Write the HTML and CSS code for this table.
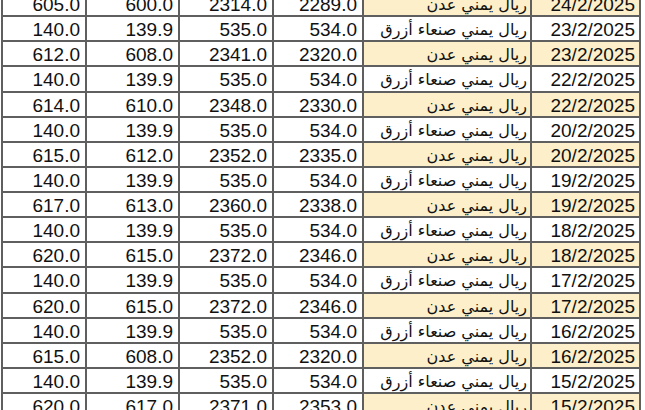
FILE: index.html
```html
<!DOCTYPE html>
<html lang="ar">
<head>
<meta charset="utf-8">
<link rel="stylesheet" href="styles.css">
</head>
<body>
<table class="sheet">
  <colgroup><col class="w1"><col class="w2"><col class="w3"><col class="w4"><col class="w5"><col class="w6"></colgroup>
  <tr><td>605.0</td><td>600.0</td><td>2314.0</td><td>2289.0</td><td class="t y">ريال يمني عدن</td><td class="d y">24/2/2025</td></tr>
  <tr><td>140.0</td><td>139.9</td><td>535.0</td><td>534.0</td><td class="t">ريال يمني صنعاء أزرق</td><td class="d">23/2/2025</td></tr>
  <tr><td>612.0</td><td>608.0</td><td>2341.0</td><td>2320.0</td><td class="t y">ريال يمني عدن</td><td class="d y">23/2/2025</td></tr>
  <tr><td>140.0</td><td>139.9</td><td>535.0</td><td>534.0</td><td class="t">ريال يمني صنعاء أزرق</td><td class="d">22/2/2025</td></tr>
  <tr><td>614.0</td><td>610.0</td><td>2348.0</td><td>2330.0</td><td class="t y">ريال يمني عدن</td><td class="d y">22/2/2025</td></tr>
  <tr><td>140.0</td><td>139.9</td><td>535.0</td><td>534.0</td><td class="t">ريال يمني صنعاء أزرق</td><td class="d">20/2/2025</td></tr>
  <tr><td>615.0</td><td>612.0</td><td>2352.0</td><td>2335.0</td><td class="t y">ريال يمني عدن</td><td class="d y">20/2/2025</td></tr>
  <tr><td>140.0</td><td>139.9</td><td>535.0</td><td>534.0</td><td class="t">ريال يمني صنعاء أزرق</td><td class="d">19/2/2025</td></tr>
  <tr><td>617.0</td><td>613.0</td><td>2360.0</td><td>2338.0</td><td class="t y">ريال يمني عدن</td><td class="d y">19/2/2025</td></tr>
  <tr><td>140.0</td><td>139.9</td><td>535.0</td><td>534.0</td><td class="t">ريال يمني صنعاء أزرق</td><td class="d">18/2/2025</td></tr>
  <tr><td>620.0</td><td>615.0</td><td>2372.0</td><td>2346.0</td><td class="t y">ريال يمني عدن</td><td class="d y">18/2/2025</td></tr>
  <tr><td>140.0</td><td>139.9</td><td>535.0</td><td>534.0</td><td class="t">ريال يمني صنعاء أزرق</td><td class="d">17/2/2025</td></tr>
  <tr><td>620.0</td><td>615.0</td><td>2372.0</td><td>2346.0</td><td class="t y">ريال يمني عدن</td><td class="d y">17/2/2025</td></tr>
  <tr><td>140.0</td><td>139.9</td><td>535.0</td><td>534.0</td><td class="t">ريال يمني صنعاء أزرق</td><td class="d">16/2/2025</td></tr>
  <tr><td>615.0</td><td>608.0</td><td>2352.0</td><td>2320.0</td><td class="t y">ريال يمني عدن</td><td class="d y">16/2/2025</td></tr>
  <tr><td>140.0</td><td>139.9</td><td>535.0</td><td>534.0</td><td class="t">ريال يمني صنعاء أزرق</td><td class="d">15/2/2025</td></tr>
  <tr><td>620.0</td><td>617.0</td><td>2371.0</td><td>2353.0</td><td class="t y">ريال يمني عدن</td><td class="d y">15/2/2025</td></tr>
</table>
</body>
</html>
```
FILE: styles.css
```css
html, body {
  margin: 0;
  padding: 0;
  background: #ffffff;
  overflow: hidden;
}
.sheet {
  border-collapse: collapse;
  table-layout: fixed;
  width: 638px;
  margin: -10px 0 0 1px;
}
.w1 { width: 84px; }
.w2 { width: 93px; }
.w3 { width: 94px; }
.w4 { width: 90px; }
.w5 { width: 168px; }
.w6 { width: 109px; }
.sheet td {
  border: 2px solid #5f5f5f;
  height: 25.13px;
  box-sizing: border-box;
  background: #ffffff;
  color: #111111;
  font-family: "Liberation Sans", Arial, sans-serif;
  font-size: 19px;
  line-height: 20px;
  padding: 3px 5px 0 0;
  text-align: right;
  vertical-align: top;
  white-space: nowrap;
  overflow: hidden;
}
.sheet td.t {
  direction: rtl;
  text-align: right;
  padding-right: 3px;
  font-family: "DejaVu Sans", sans-serif;
  font-size: 16px;
}
.sheet td.d {
  padding-right: 4px;
}
.sheet td.y {
  background: #fcefc9;
}
```
